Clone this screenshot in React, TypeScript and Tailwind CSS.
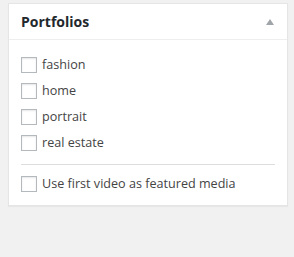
const terms = ["fashion", "home", "portrait", "real estate"];

function Box({ label }: { label: string }) {
  return (
    <label className="flex h-[26px] items-center">
      <span className="h-4 w-4 shrink-0 border border-[#b4b9be] bg-white shadow-[inset_0_1px_2px_rgba(0,0,0,0.1)]" />
      <span className="ml-[5px] text-[12.6px] text-[#444]">{label}</span>
    </label>
  );
}

export default function App() {
  return (
    <div
      className="min-h-screen bg-[#f1f1f1] px-2 pt-[3px]"
      style={{ fontFamily: '"Open Sans", "Liberation Sans", sans-serif' }}
    >
      <div className="w-[280px] border border-[#e5e5e5] bg-white shadow-[0_1px_1px_rgba(0,0,0,0.04)]">
        <div className="flex h-[36px] items-center justify-between border-b border-[#eee] pl-3 pr-[13px]">
          <h2 className="text-[14px] font-bold text-[#23282d]">Portfolios</h2>
          <svg width="8" height="6" viewBox="0 0 8 6">
            <polygon points="4,0 8,6 0,6" fill="#a0a5aa" />
          </svg>
        </div>
        <div className="px-3 pt-3 pb-2">
          {terms.map((t) => (
            <Box key={t} label={t} />
          ))}
          <div className="mt-2 border-t border-[#ddd]" />
          <div className="pt-[6px]">
            <Box label="Use first video as featured media" />
          </div>
        </div>
      </div>
    </div>
  );
}
